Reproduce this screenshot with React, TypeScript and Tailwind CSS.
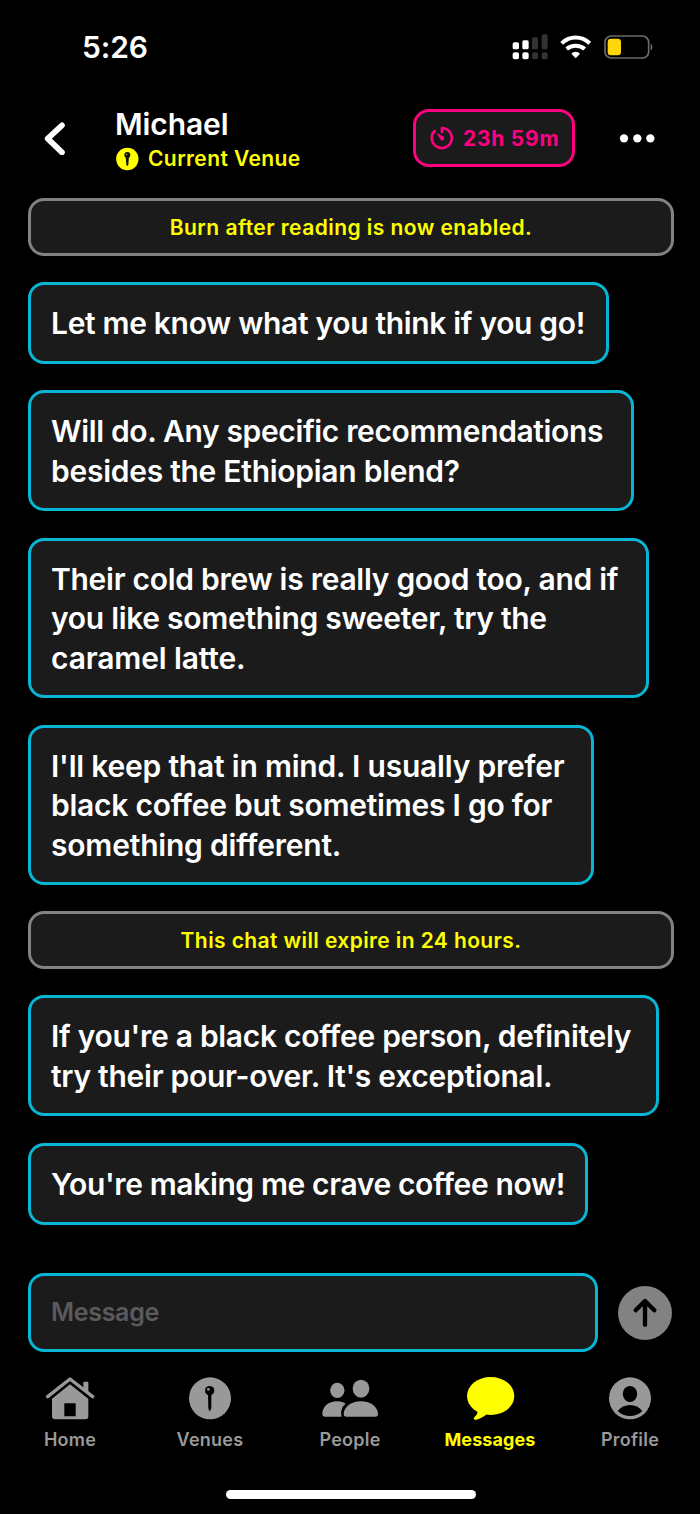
import { FC, ReactNode } from "react";
import clsx from "clsx";

type Entry = {
  kind: "message" | "notice";
  box: string;
  lines: { text: string; tracking: string }[];
};

const ENTRIES: Entry[] = [
  {
    kind: "notice",
    box: "mt-[31px] h-[58px]",
    lines: [{ text: "Burn after reading is now enabled.", tracking: "tracking-[0.45px]" }],
  },
  {
    kind: "message",
    box: "mt-[26px] w-[581px] h-[82px]",
    lines: [{ text: "Let me know what you think if you go!", tracking: "tracking-[-0.33px]" }],
  },
  {
    kind: "message",
    box: "mt-[26px] w-[606px] h-[121px]",
    lines: [
      { text: "Will do. Any specific recommendations", tracking: "tracking-[-0.36px]" },
      { text: "besides the Ethiopian blend?", tracking: "tracking-[-0.27px]" },
    ],
  },
  {
    kind: "message",
    box: "mt-[27px] w-[621px] h-[160px]",
    lines: [
      { text: "Their cold brew is really good too, and if", tracking: "tracking-[-0.28px]" },
      { text: "you like something sweeter, try the", tracking: "tracking-[-0.29px]" },
      { text: "caramel latte.", tracking: "tracking-[-0.13px]" },
    ],
  },
  {
    kind: "message",
    box: "mt-[27px] w-[566px] h-[160px]",
    lines: [
      { text: "I'll keep that in mind. I usually prefer", tracking: "tracking-[-0.21px]" },
      { text: "black coffee but sometimes I go for", tracking: "tracking-[-0.24px]" },
      { text: "something different.", tracking: "tracking-[-0.2px]" },
    ],
  },
  {
    kind: "notice",
    box: "mt-[26px] h-[58px]",
    lines: [{ text: "This chat will expire in 24 hours.", tracking: "tracking-[0.4px]" }],
  },
  {
    kind: "message",
    box: "mt-[26px] w-[631px] h-[121px]",
    lines: [
      { text: "If you're a black coffee person, definitely", tracking: "tracking-[-0.29px]" },
      { text: "try their pour-over. It's exceptional.", tracking: "tracking-[-0.27px]" },
    ],
  },
  {
    kind: "message",
    box: "mt-[27px] w-[560px] h-[82px]",
    lines: [{ text: "You're making me crave coffee now!", tracking: "tracking-[-0.38px]" }],
  },
];

const StatusBar: FC = () => (
  <div className="flex h-[94px] items-center pl-[82px] pr-[46px]">
    <span className="text-[30px] font-semibold leading-none tracking-[-0.1px]">5:26</span>
    <svg className="ml-auto" width="36" height="26" viewBox="0 0 108 78">
      <g fill="#fff">
        <rect x="2" y="25" width="19" height="21" rx="5" />
        <rect x="31" y="19" width="19" height="27" rx="5" />
        <rect x="2" y="55" width="19" height="21" rx="6" />
        <rect x="31" y="55" width="19" height="21" rx="6" />
      </g>
      <g fill="#333">
        <rect x="60" y="10" width="18" height="36" rx="5" />
        <rect x="89" y="1" width="18" height="45" rx="5" />
        <rect x="60" y="55" width="18" height="21" rx="6" />
        <rect x="89" y="55" width="18" height="21" rx="6" />
      </g>
    </svg>
    <svg className="ml-3" width="31" height="24" viewBox="0 0 93 72">
      <g fill="none" stroke="#fff" strokeWidth="12">
        <path d="M5 25C29 2 65 2 89 25" />
        <path d="M20 42C35 29 59 29 74 42" />
      </g>
      <path d="M34 56C41 48 53 48 60 56L47 70Z" fill="#fff" />
    </svg>
    <svg className="ml-[13px]" width="50" height="24" viewBox="0 0 150 72">
      <rect x="3" y="3" width="131" height="66" rx="19" fill="none" stroke="#6b6b6b" strokeWidth="5" />
      <rect x="11" y="11" width="40" height="50" rx="10" fill="#ffd60a" />
      <path d="M140 26C147 28 147 44 140 46Z" fill="#6b6b6b" />
    </svg>
  </div>
);

const Header: FC = () => (
  <header className="flex h-[73px] items-start pl-11">
    <svg className="mt-[27px]" width="22" height="34" viewBox="0 0 66 102">
      <path d="M54 13L11 53L54 94" fill="none" stroke="#fff" strokeWidth="17" strokeLinecap="round" strokeLinejoin="round" />
    </svg>
    <div className="ml-[49px] mt-[13px] w-[298px]">
      <h1 className="whitespace-nowrap text-[30px] font-semibold leading-[34px] tracking-[-0.1px]">Michael</h1>
      <div className="mt-[6px] flex items-center text-[#ff0]">
        <svg width="24" height="24" viewBox="0 0 72 72">
          <circle cx="37" cy="36" r="33.5" fill="currentColor" />
          <circle cx="37" cy="24" r="9" fill="#111" />
          <path d="M32 27H42L40 54L37 57L34 54Z" fill="#111" />
          <circle cx="35" cy="22" r="2" fill="currentColor" />
        </svg>
        <span className="ml-[9px] whitespace-nowrap text-[21px] font-semibold leading-6 tracking-[0.4px]">Current Venue</span>
      </div>
    </div>
    <div className="mt-[15px] flex h-[58px] w-[162px] items-center rounded-[16px] border-[3px] border-[#ff0080] bg-[#1b1b1b] pl-[14px] text-[#ff0080]">
      <svg width="24" height="24" viewBox="0 0 72 72" fill="none" stroke="currentColor" strokeWidth="8" strokeLinecap="round" strokeLinejoin="round">
        <path d="M36 18V6A30 30 0 1 1 14 15" />
        <path d="M23 24L40 34Q43 42 35 42Z" fill="currentColor" strokeWidth="4" />
      </svg>
      <span className="ml-[9px] mt-px whitespace-nowrap text-[21px] font-bold leading-none tracking-[0.75px]">23h 59m</span>
    </div>
    <svg className="ml-11" width="36" height="88" viewBox="0 0 108 264">
      <g fill="#fff">
        <circle cx="15" cy="133" r="12.5" />
        <circle cx="55" cy="133" r="12.5" />
        <circle cx="94" cy="133" r="12.5" />
      </g>
    </svg>
  </header>
);

const Bubble: FC<{ entry: Entry }> = ({ entry }) => (
  <div
    className={clsx(
      "flex shrink-0 flex-col justify-center rounded-[16px] border-[3px] bg-[#1b1b1b] pt-[2px]",
      entry.box,
      entry.kind === "notice"
        ? "w-[646px] items-center border-[#828282] text-[21px] font-semibold leading-6 text-[#ff0]"
        : "border-[#06b6d4] pl-5 text-[30px] font-semibold leading-[39.5px] text-white"
    )}
  >
    {entry.lines.map((line) => (
      <div key={line.text} className={clsx("whitespace-nowrap", line.tracking)}>
        {line.text}
      </div>
    ))}
  </div>
);

const TabItem: FC<{ label: string; active?: boolean; children: ReactNode }> = ({ label, active, children }) => (
  <div className={clsx("flex w-[140px] flex-col items-center", active ? "text-[#ff0]" : "text-[#999]")}>
    {children}
    <span
      className={clsx(
        "mt-2 text-[18px] leading-6",
        active ? "font-bold tracking-[0.1px]" : "font-semibold tracking-[0.25px]"
      )}
    >
      {label}
    </span>
  </div>
);

const TabBar: FC = () => (
  <nav className="mt-6 flex">
    <TabItem label="Home">
      <svg width="50" height="44" viewBox="0 0 150 132" fill="currentColor">
        <path d="M115 20Q115 17 118 17H127Q130 17 130 20V54L115 41Z" />
        <path d="M8 62L75 9L143 62" fill="none" stroke="currentColor" strokeWidth="10" strokeLinecap="round" strokeLinejoin="round" />
        <path fillRule="evenodd" d="M75 25L130 68V121Q130 130 121 130H30Q21 130 21 121V68ZM58 82V121H92V82Z" />
      </svg>
    </TabItem>
    <TabItem label="Venues">
      <svg width="50" height="44" viewBox="0 0 150 132" fill="currentColor">
        <circle cx="75" cy="67" r="63" />
        <circle cx="74" cy="44" r="14" fill="#000" />
        <path d="M69 54H79V96Q76 106 74 106Q72 106 70 96Z" fill="#000" />
        <circle cx="70" cy="40" r="4" />
      </svg>
    </TabItem>
    <TabItem label="People">
      <svg width="58" height="44" viewBox="0 0 174 132" fill="currentColor">
        <ellipse cx="49" cy="43" rx="21.5" ry="23" />
        <ellipse cx="120" cy="38" rx="25" ry="27" />
        <path d="M4 115C4 92 22 76 49 76C60 76 68 79 74 83C62 92 58 106 62 122H11Q4 122 4 115Z" />
        <path d="M68 114C68 94 90 76 120 76C150 76 171 94 171 114Q171 122 163 122H76Q68 122 68 114Z" />
      </svg>
    </TabItem>
    <TabItem label="Messages" active>
      <svg width="50" height="44" viewBox="0 0 150 132" fill="currentColor">
        <ellipse cx="77" cy="60" rx="71" ry="57" />
        <path d="M38 103C39 112 34 119 28 124C24 129 28 132 34 131C46 129 56 122 65 115Z" />
      </svg>
    </TabItem>
    <TabItem label="Profile">
      <svg width="50" height="44" viewBox="0 0 150 132" fill="currentColor">
        <circle cx="75" cy="67" r="63" />
        <ellipse cx="75" cy="54" rx="21.5" ry="24" fill="#000" />
        <path d="M38 105C56 81 94 81 112 105C92 125 58 125 38 105Z" fill="#000" />
      </svg>
    </TabItem>
  </nav>
);

const App: FC = () => {
  return (
    <div className="flex h-[1514px] w-[700px] flex-col overflow-hidden bg-black font-[Inter,sans-serif] text-white">
      <StatusBar />
      <Header />

      <main className="flex h-[1106px] flex-col pl-7">
        {ENTRIES.map((entry, i) => (
          <Bubble key={i} entry={entry} />
        ))}
      </main>

      <div className="flex h-[79px] shrink-0 items-center pl-7">
        <div className="flex h-[79px] w-[570px] items-center rounded-[16px] border-[3px] border-[#06b6d4] bg-[#1b1b1b] pl-5">
          <span className="text-[25px] font-semibold tracking-[-0.3px] text-[#5a5a5c]">Message</span>
        </div>
        <svg className="ml-5" width="54" height="54" viewBox="0 0 162 162">
          <circle cx="81" cy="81" r="81" fill="#828282" />
          <path d="M81 116V47M53 73L81 45L109 73" fill="none" stroke="#000" strokeWidth="13" strokeLinecap="round" strokeLinejoin="round" />
        </svg>
      </div>

      <TabBar />
      <div className="ml-[226px] mt-[38px] h-[9px] w-[250px] rounded-full bg-white" />
    </div>
  );
};

export default App;
